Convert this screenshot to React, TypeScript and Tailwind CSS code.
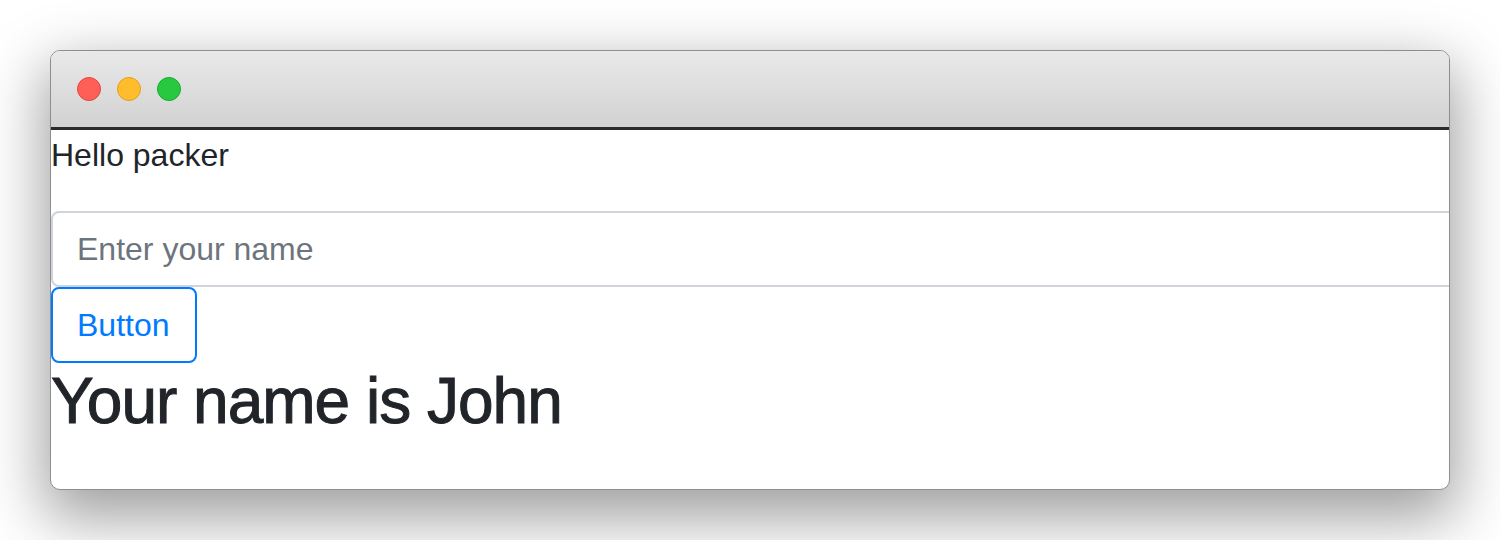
import React from "react";

export default function App() {
  return (
    <div className="w-[1500px] h-[540px] bg-white pt-[50px] pl-[50px]">
      <div className="w-[1400px] h-[440px] rounded-[10px] border border-[#8e8e8e] overflow-hidden bg-white shadow-[0_22px_60px_6px_rgba(0,0,0,0.38)] flex flex-col">
        <div className="h-[76px] bg-gradient-to-b from-[#e9e9e9] to-[#d2d2d2] flex items-center pl-[26px] gap-[16px] shrink-0">
          <span className="w-[24px] h-[24px] rounded-full bg-[#ff5f57] border border-[#e2463f]" />
          <span className="w-[24px] h-[24px] rounded-full bg-[#ffbd2e] border border-[#e1a116]" />
          <span className="w-[24px] h-[24px] rounded-full bg-[#28c940] border border-[#12ac28]" />
        </div>
        <div className="h-[3px] bg-[#2b2b2b] shrink-0" />
        <div className="flex-1 pt-[1px] text-[#212529] font-['Liberation_Sans',Arial,sans-serif]">
          <p className="text-[32px] leading-[48px] mb-[32px]">Hello packer</p>
          <input
            className="block w-[1420px] h-[76px] border-2 border-[#ced4da] rounded-[8px] px-[24px] text-[32px] text-[#495057] placeholder:text-[#6c757d] outline-none bg-white"
            placeholder="Enter your name"
          />
          <button className="block h-[76px] w-[146px] border-2 border-[#007bff] rounded-[8px] text-[#007bff] text-[32px] px-[24px] text-left bg-white">
            Button
          </button>
          <h2 className="text-[64px] leading-[1.2] tracking-[-1px] [-webkit-text-stroke:1px_#212529]">
            Your name is John
          </h2>
        </div>
      </div>
    </div>
  );
}
